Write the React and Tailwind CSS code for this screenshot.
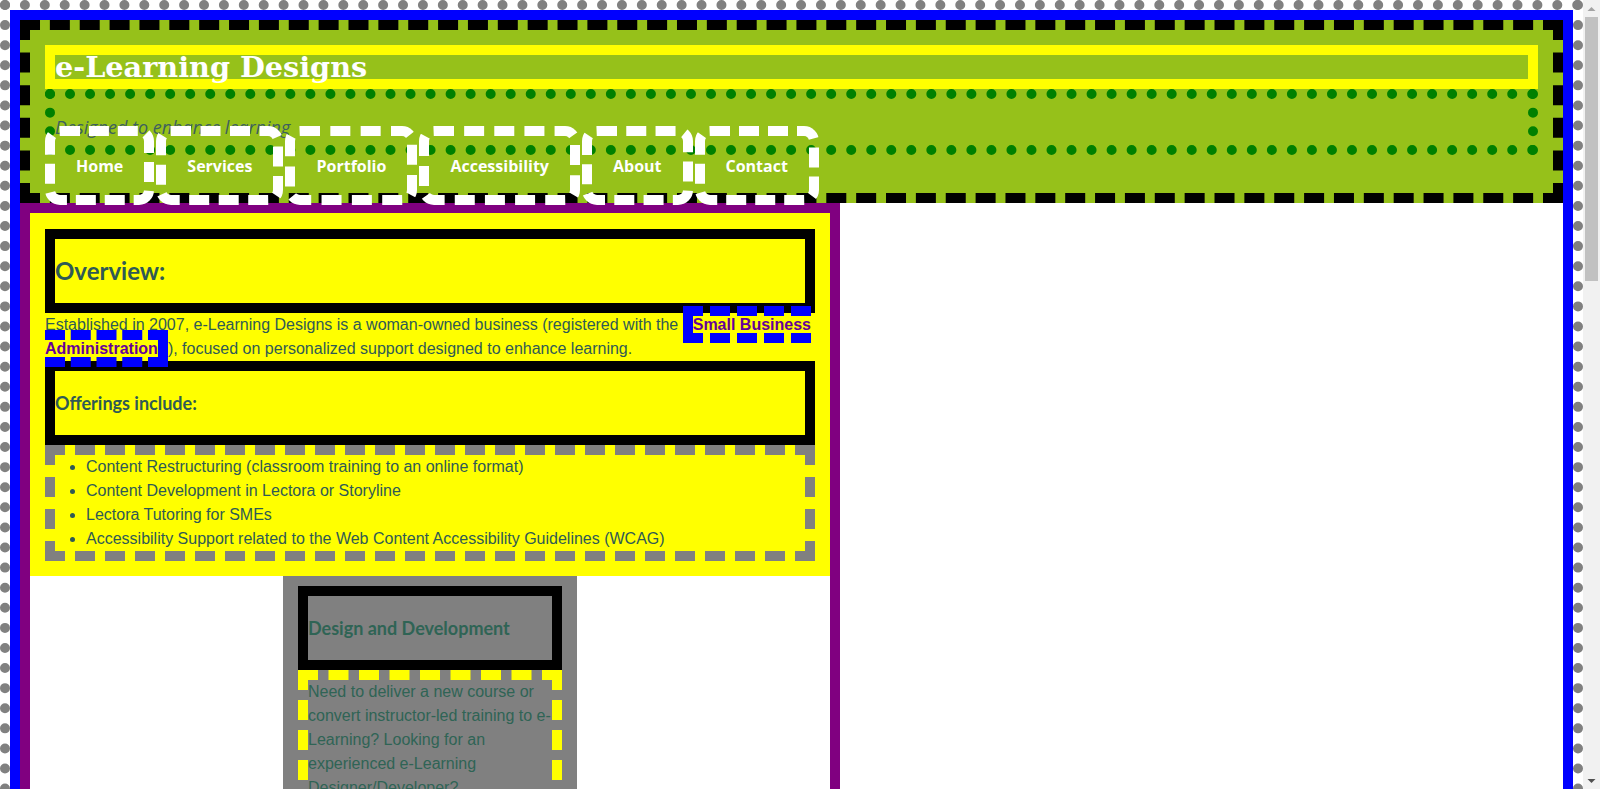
export default function App() {
  const navItems = ["Home", "Services", "Portfolio", "Accessibility", "About", "Contact"];
  const articles = [
    {
      t: "Design and Development",
      p: "Need to deliver a new course or convert instructor-led training to e-Learning? Looking for an experienced e-Learning Designer/Developer?",
    },
    {
      t: "Lectora Tutoring",
      p: "Are you a subject matter expert who wants to build your own courses? Personalized one-on-one tutoring sessions will help you get comfortable with Lectora quickly.",
    },
    {
      t: "Accessibility Support",
      p: "Does your content need to meet the Web Content Accessibility Guidelines? Get help reviewing courses and fixing accessibility issues.",
    },
  ];
  return (
    <div className="flex h-screen overflow-hidden bg-white">
      <div className="min-w-0 flex-1 overflow-hidden">
        <div className="min-h-screen border-[10px] border-dotted border-[#808080] bg-white font-['Liberation_Sans',Arial,sans-serif] text-[#2f5a55]">
          <div className="border-[10px] border-solid border-[#0000ff]">
            <header className="h-[183px] border-[10px] border-dashed border-black bg-[#96c11a] p-[15px]">
              <h1 className="h-[44px] border-[10px] border-solid border-[#ffff00] font-['DejaVu_Serif',serif] text-[28.7px] font-bold leading-[24px] text-white">
                e-Learning Designs
              </h1>
              <p className="h-[66px] border-[10px] border-dotted border-[#008000] pt-[17px] font-['Open_Sans',sans-serif] text-[18px] italic leading-[23px] text-[#3d5f5f]">
                Designed to enhance learning
              </p>
              <nav className="relative z-10 -mt-[29px] flex gap-[2px]">
                {navItems.map((n) => (
                  <a
                    key={n}
                    href="#"
                    className="block rounded-[15px] border-[10px] border-dashed border-white px-[21px] pt-[21px] pb-[19px] font-['Open_Sans',sans-serif] text-[16px] font-bold leading-[19px] text-white"
                  >
                    {n}
                  </a>
                ))}
              </nav>
            </header>
            <main className="w-[820px] border-[10px] border-solid border-[#800080]">
              <section className="bg-[#ffff00] px-[15px] pt-[16px] pb-[15px]">
                <h2 className="flex h-[84px] items-center border-[10px] border-solid border-black font-['Lato',sans-serif] text-[24px] font-bold">
                  Overview:
                </h2>
                <p className="text-[16px] leading-6">
                  Established in 2007, e-Learning Designs is a woman-owned business (registered with the{" "}
                  <a href="#" className="border-[10px] border-dashed border-[#0000ff] font-bold text-[#660099]">
                    Small Business Administration
                  </a>
                  ), focused on personalized support designed to enhance learning.
                </p>
                <h3 className="flex h-[84px] items-center border-[10px] border-solid border-black font-['Lato',sans-serif] text-[18px] font-bold">
                  Offerings include:
                </h3>
                <ul className="list-disc border-[10px] border-dashed border-[#808080] pl-[31px] text-[16px] leading-6">
                  <li>Content Restructuring (classroom training to an online format)</li>
                  <li>Content Development in Lectora or Storyline</li>
                  <li>Lectora Tutoring for SMEs</li>
                  <li>Accessibility Support related to the Web Content Accessibility Guidelines (WCAG)</li>
                </ul>
              </section>
              {articles.map((a) => (
                <article key={a.t} className="mx-auto w-[294px] bg-[#808080] px-[15px] pt-[10px] pb-[15px]">
                  <h3 className="flex h-[84px] items-center border-[10px] border-solid border-black font-['Lato',sans-serif] text-[18px] font-bold text-[#2f6455]">
                    {a.t}
                  </h3>
                  <p className="border-[10px] border-dashed border-[#ffff00] text-[16px] leading-6 text-[#2f6455]">{a.p}</p>
                </article>
              ))}
            </main>
          </div>
        </div>
      </div>
      <div className="flex w-[17px] shrink-0 flex-col bg-[#f1f1f1]">
        <div className="flex h-[17px] items-center justify-center">
          <svg width="9" height="6" viewBox="0 0 9 6">
            <polygon points="0.5,5 4.5,1 8.5,5" fill="#a3a3a3" />
          </svg>
        </div>
        <div className="mx-[2px] h-[264px] bg-[#c1c1c1]" />
        <div className="flex-1" />
        <div className="flex h-[17px] items-center justify-center">
          <svg width="9" height="6" viewBox="0 0 9 6">
            <polygon points="0.5,1 4.5,5 8.5,1" fill="#505050" />
          </svg>
        </div>
      </div>
    </div>
  );
}
